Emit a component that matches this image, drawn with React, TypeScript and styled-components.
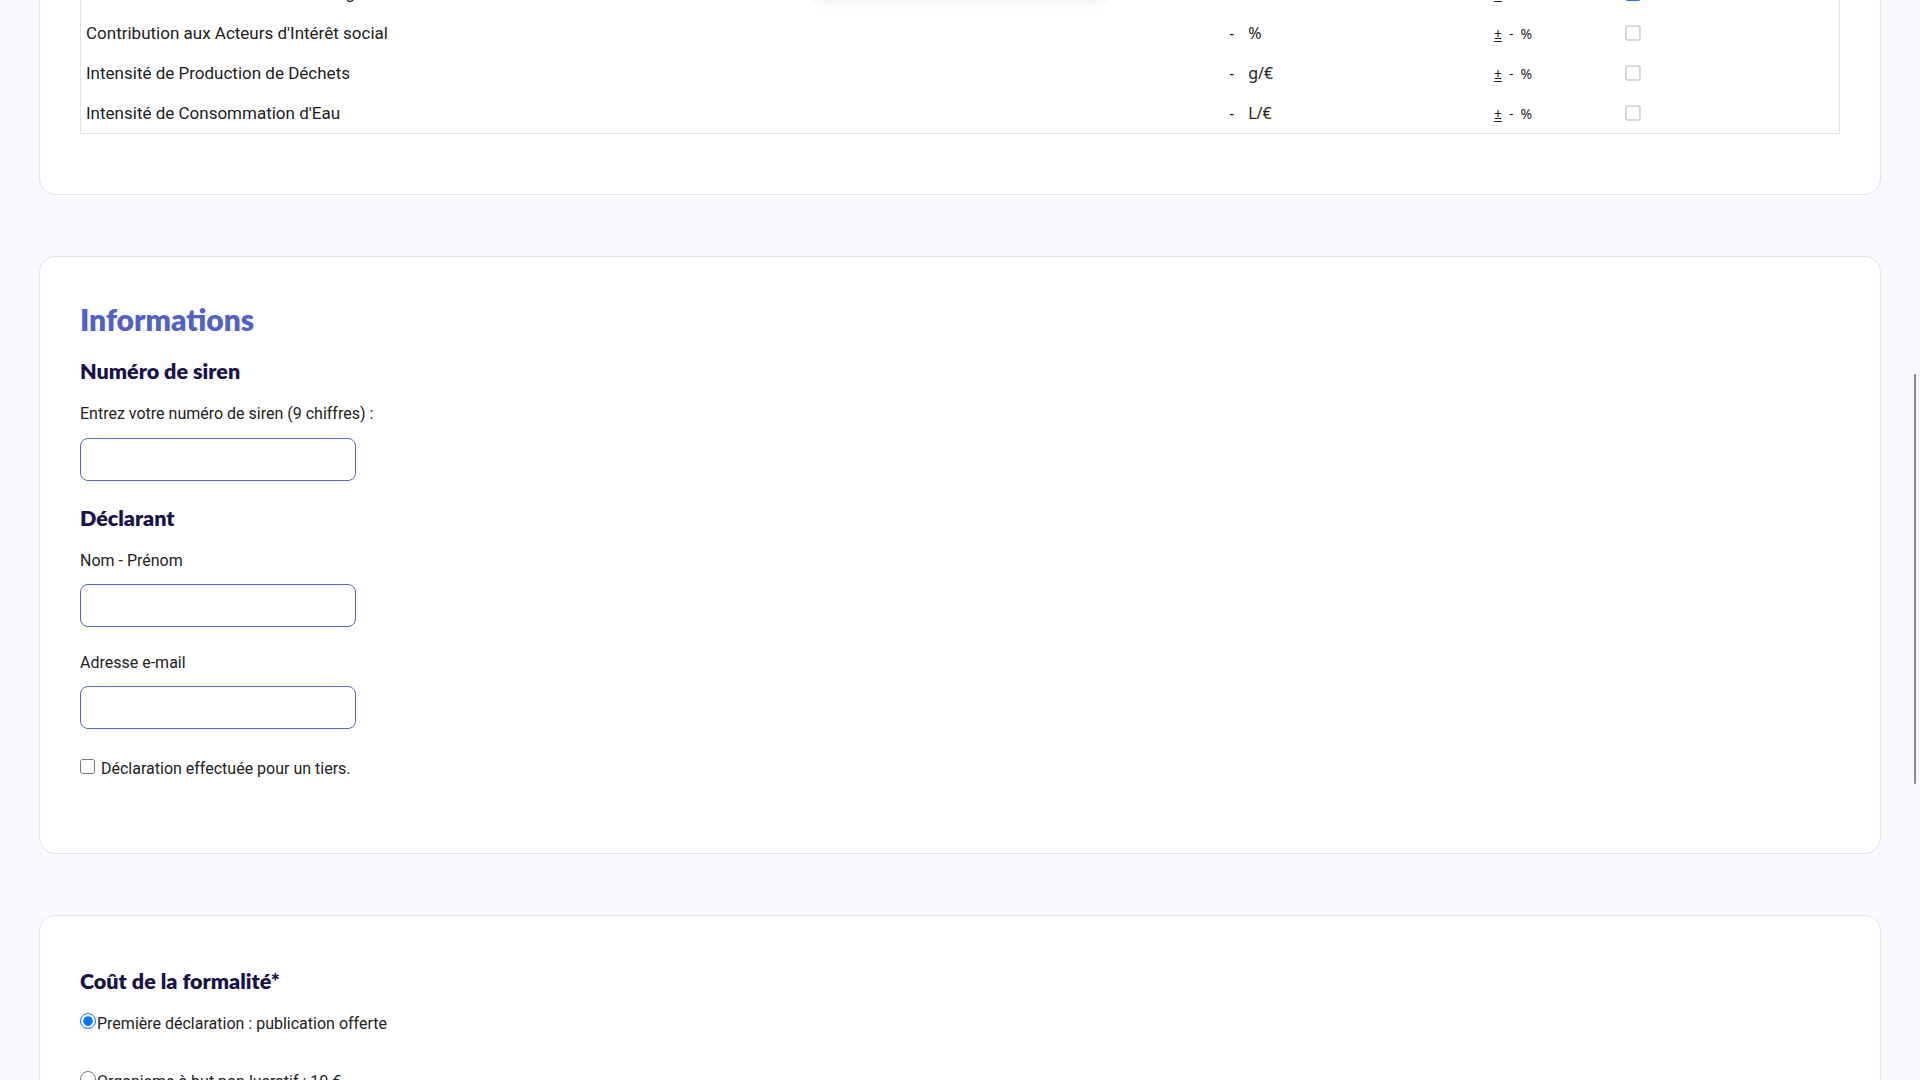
import React from "react";
import styled, { createGlobalStyle } from "styled-components";

const GlobalStyle = createGlobalStyle`
  html, body {
    margin: 0;
    padding: 0;
    overflow: hidden;
    background: #f8f8fd;
    font-family: Roboto, "Liberation Sans", Arial, sans-serif;
    color: #212121;
  }
  * { box-sizing: border-box; }
`;

const Page = styled.main`
  display: flex;
  flex-direction: column;
  gap: 61px;
  padding: 0 39px;
`;

const Card = styled.section<{ $pad: string; $offset?: number }>`
  background: #ffffff;
  border: 1px solid #e3e3f0;
  border-radius: 16px;
  padding: ${(p) => p.$pad};
  margin-top: ${(p) => (p.$offset ? `${p.$offset}px` : "0")};
`;

const Table = styled.div`
  border: 1px solid #e2e2e6;
  border-top: none;
  margin-bottom: 20px;
`;

const Row = styled.div`
  display: grid;
  grid-template-columns: 1148px 265px 131px 1fr;
  align-items: center;
  height: 40px;
`;

const Label = styled.div`
  padding-left: 5px;
  font-size: 17px;
  color: #1c1c1c;
  white-space: nowrap;
`;

const ValueCell = styled.div`
  display: flex;
  align-items: center;
  gap: 14px;
  font-family: "Noto Sans", "Open Sans", sans-serif;
  font-size: 16px;
  color: #222;
`;

const VariationCell = styled.div`
  display: flex;
  align-items: center;
  gap: 7px;
  font-family: "Noto Sans", "Open Sans", sans-serif;
  font-size: 14px;
  color: #222;
`;

const PlusMinus = styled.span`
  text-decoration: underline;
  text-underline-offset: 2px;
`;

const CheckCell = styled.div`
  display: flex;
  align-items: center;
`;

const TableCheck = styled.input.attrs({ type: "checkbox" })`
  appearance: none;
  -webkit-appearance: none;
  display: block;
  margin: 0;
  width: 16px;
  height: 16px;
  border: 2px solid #d6d6db;
  border-radius: 3px;
  background: #fff;
  &:checked {
    background: #1a73e8;
    border-color: #1a73e8;
  }
`;

const Title = styled.h2`
  margin: 1px 0 0;
  font-family: Lato, "Open Sans", sans-serif;
  font-weight: 800;
  font-size: 30px;
  line-height: 35px;
  color: #5161c5;
`;

const SubTitle = styled.h3<{ $mt: number }>`
  margin: ${(p) => p.$mt}px 0 0;
  font-family: Lato, "Open Sans", sans-serif;
  font-weight: 800;
  font-size: 21.5px;
  line-height: 25px;
  color: #17124a;
`;

const FieldLabel = styled.label<{ $mt: number }>`
  display: block;
  margin-top: ${(p) => p.$mt}px;
  font-size: 16px;
  line-height: 19px;
  color: #222;
`;

const TextInput = styled.input<{ $mt: number }>`
  display: block;
  margin-top: ${(p) => p.$mt}px;
  width: 276px;
  height: 43px;
  border: 1px solid #5565c6;
  border-radius: 8px;
  background: #fff;
  padding: 0 12px;
  font-family: Roboto, sans-serif;
  font-size: 16px;
  outline: none;
`;

const CheckLine = styled.label<{ $mt: number }>`
  display: block;
  margin-top: ${(p) => p.$mt}px;
  font-size: 16px;
  line-height: 19px;
  color: #222;
`;

const NativeCheck = styled.input.attrs({ type: "checkbox" })`
  width: 15px;
  height: 15px;
  margin: 0 6px 1px 0;
  vertical-align: baseline;
`;

const RadioGroup = styled.div`
  display: flex;
  flex-direction: column;
  gap: 38px;
  margin-top: 19px;
`;

const RadioLine = styled.label`
  display: block;
  font-size: 16px;
  line-height: 19px;
  color: #222;
`;

const Radio = styled.input.attrs({ type: "radio" })`
  width: 16px;
  height: 16px;
  margin: 0 1px 0 0;
  vertical-align: baseline;
`;

const TopShadow = styled.div`
  position: fixed;
  top: -40px;
  left: 813px;
  width: 294px;
  height: 40px;
  background: #fff;
  border-radius: 8px;
  box-shadow: 0 2px 12px rgba(0, 0, 0, 0.07);
`;

const ScrollThumb = styled.div`
  position: fixed;
  right: 4px;
  top: 374px;
  width: 2px;
  height: 410px;
  border-radius: 1px;
  background: #8a8a8a;
`;

type Indicator = { label: string; unit: string; checked?: boolean };

const indicators: Indicator[] = [
  { label: "Intensité de Consommation d'Énergie", unit: "kWh/€", checked: true },
  { label: "Contribution aux Acteurs d'Intérêt social", unit: "%" },
  { label: "Intensité de Production de Déchets", unit: "g/€" },
  { label: "Intensité de Consommation d'Eau", unit: "L/€" },
];

export default function App() {
  return (
    <>
      <GlobalStyle />
      <Page>
        <Card $pad="40px 40px 40px" $offset={-68}>
          <Table>
            {indicators.map((it) => (
              <Row key={it.label}>
                <Label>{it.label}</Label>
                <ValueCell>
                  <span>-</span>
                  <span>{it.unit}</span>
                </ValueCell>
                <VariationCell>
                  <PlusMinus>±</PlusMinus>
                  <span>-</span>
                  <span>%</span>
                </VariationCell>
                <CheckCell>
                  <TableCheck defaultChecked={!!it.checked} />
                </CheckCell>
              </Row>
            ))}
          </Table>
        </Card>

        <Card $pad="44px 40px 75px">
          <Title>Informations</Title>
          <SubTitle $mt={22}>Numéro de siren</SubTitle>
          <FieldLabel $mt={20} htmlFor="siren">
            Entrez votre numéro de siren (9 chiffres) :
          </FieldLabel>
          <TextInput $mt={15} id="siren" type="text" />
          <SubTitle $mt={25}>Déclarant</SubTitle>
          <FieldLabel $mt={20} htmlFor="nom">
            Nom - Prénom
          </FieldLabel>
          <TextInput $mt={14} id="nom" type="text" />
          <FieldLabel $mt={26} htmlFor="email">
            Adresse e-mail
          </FieldLabel>
          <TextInput $mt={14} id="email" type="email" />
          <CheckLine $mt={30}>
            <NativeCheck />
            Déclaration effectuée pour un tiers.
          </CheckLine>
        </Card>

        <Card $pad="53px 40px 60px">
          <SubTitle $mt={0}>Coût de la formalité*</SubTitle>
          <RadioGroup>
            <RadioLine>
              <Radio name="cout" defaultChecked />
              Première déclaration : publication offerte
            </RadioLine>
            <RadioLine>
              <Radio name="cout" />
              Organisme à but non lucratif : 10 €
            </RadioLine>
            <RadioLine>
              <Radio name="cout" />
              Entreprise : 30 €
            </RadioLine>
          </RadioGroup>
        </Card>
      </Page>
      <TopShadow />
      <ScrollThumb />
    </>
  );
}
